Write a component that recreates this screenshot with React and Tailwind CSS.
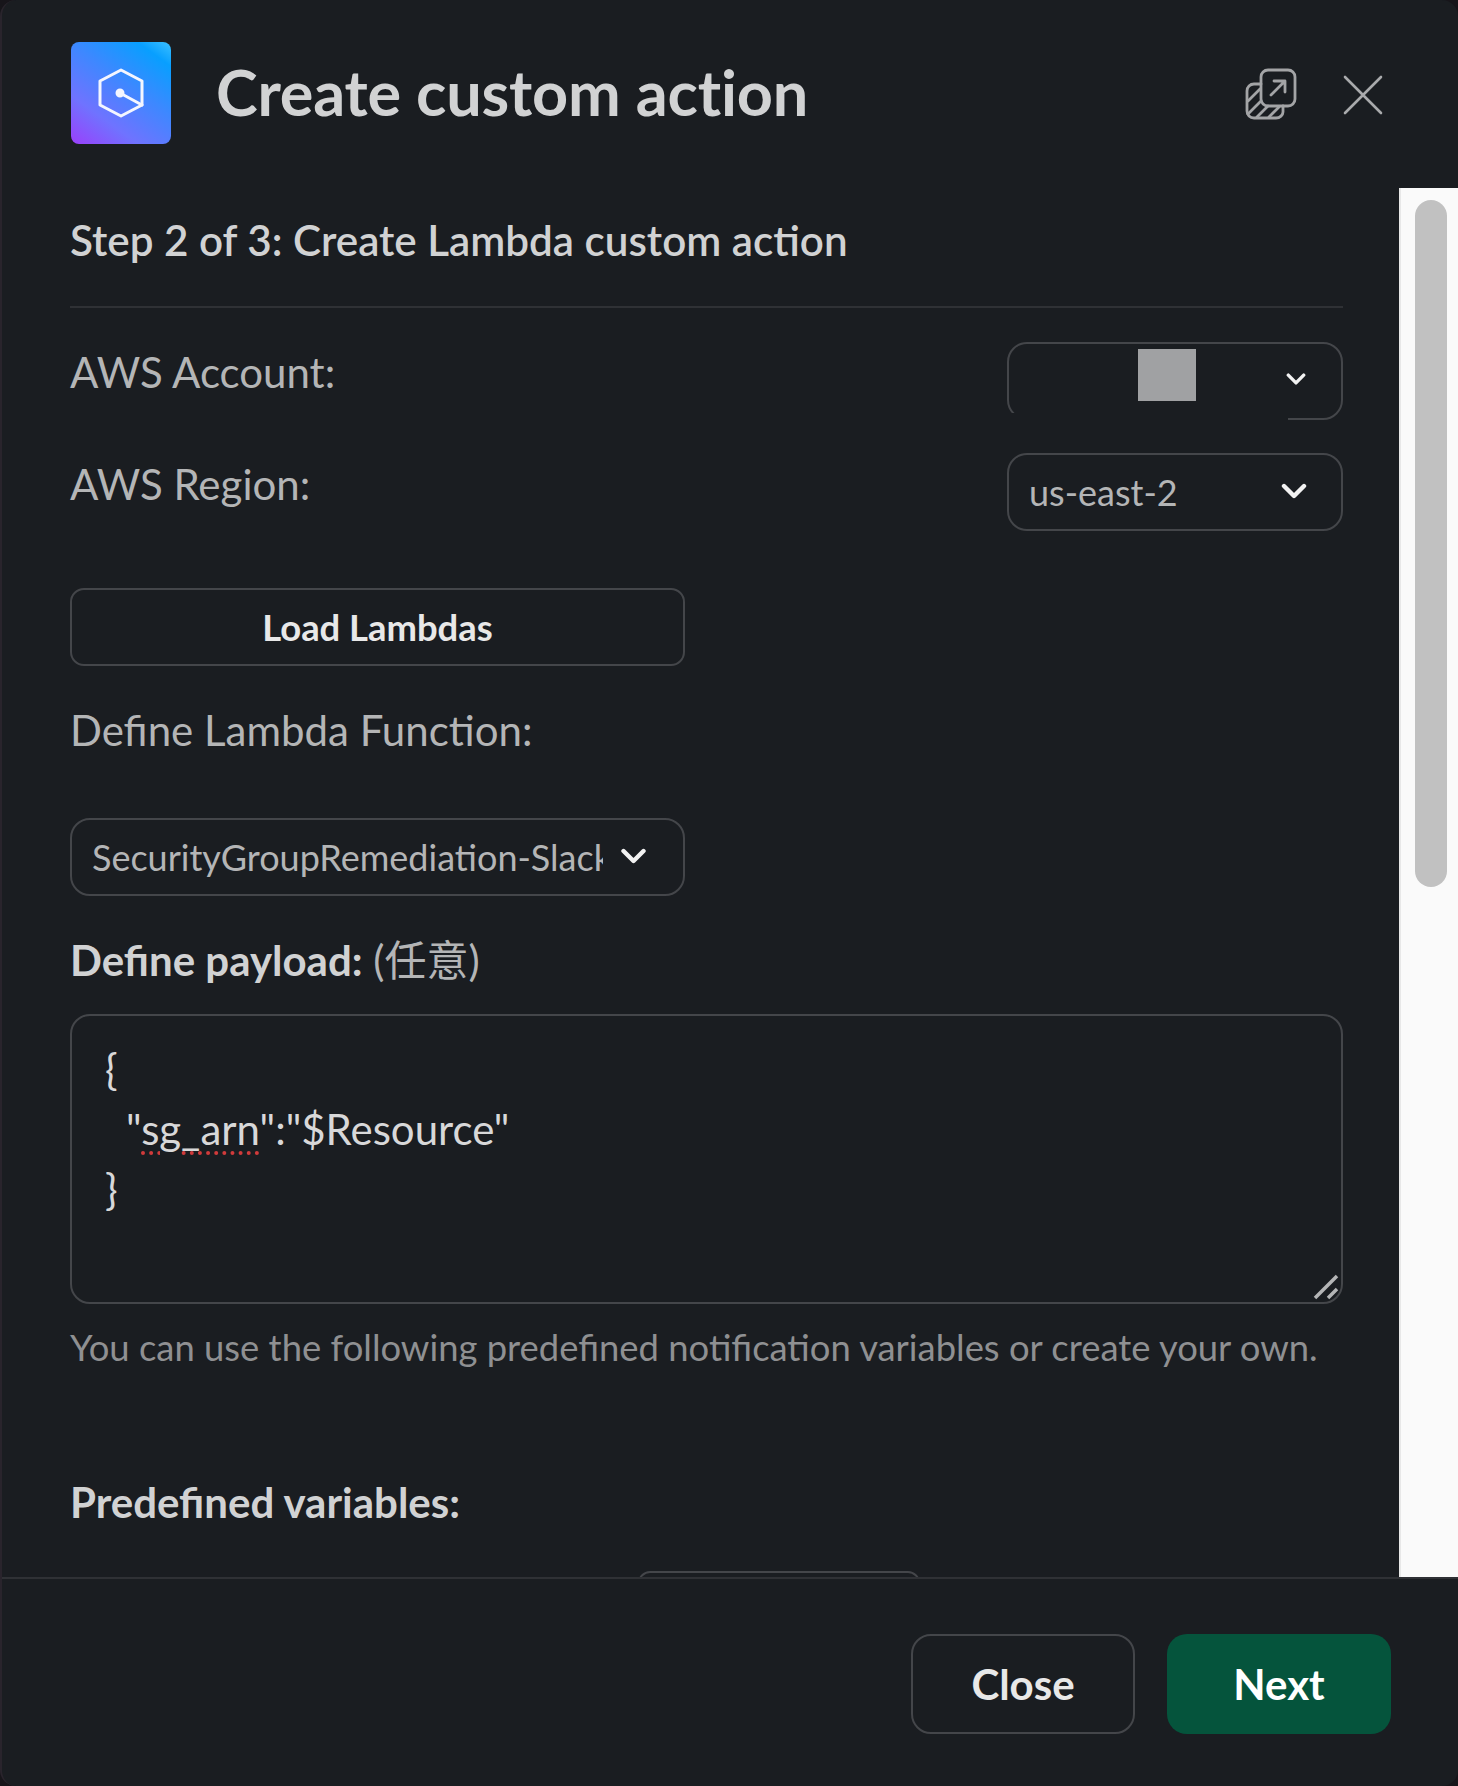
import React from "react";

const LogoMark = () => (
  <div className="flex h-[102px] w-[100px] shrink-0 items-center justify-center rounded-[8px] bg-[linear-gradient(36deg,#9b3ffb_0%,#6f73ff_28%,#3d88ff_58%,#089fff_86%,#3cc0ff_100%)]">
    <svg width="46" height="50" viewBox="0 0 46 50" fill="none" stroke="#f4f6ff" strokeWidth="3" strokeLinejoin="round" strokeLinecap="round">
      <path d="M23 2 L44 13 V37 L23 48 L2 37 V13 Z" />
      <path d="M22 25 L44 37" />
      <circle cx="22" cy="25" r="3" fill="#f4f6ff" />
    </svg>
  </div>
);

const PopOutIcon = () => (
  <svg width="52" height="52" viewBox="0 0 52 52" fill="none" stroke="#a3a4a6" strokeWidth="2.8" strokeLinecap="round" strokeLinejoin="round">
    <rect x="16" y="2" width="34" height="36" rx="7" />
    <path d="M26 27 L39 14 M29 13 H40 V24" />
    <path d="M16 16 H9 C5 16 2 19 2 23 V43 C2 47 5 50 9 50 H31 C35 50 38 47 38 44 V38" />
    <path d="M3 33 L15 21 M3 46 L16 33 M12 49 L23 38 M24 49 L34 39" />
  </svg>
);

const CloseIcon = () => (
  <svg width="40" height="40" viewBox="0 0 40 40" fill="none" stroke="#a9aaac" strokeWidth="2.6" strokeLinecap="round">
    <path d="M2 2 L38 38 M38 2 L2 38" />
  </svg>
);

const Chevron = ({ className }) => (
  <svg className={className} viewBox="0 0 26 16" fill="none" stroke="#f2f2f2" strokeWidth="4.4" strokeLinecap="round" strokeLinejoin="round">
    <path d="M3 3 L13 13 L23 3" />
  </svg>
);

const Select = ({ children, chevron }) => (
  <div className="relative flex h-[78px] w-full items-center rounded-[20px] border-2 border-[#44464a] pl-[20px] text-[36px] text-[#b4b5b6]">
    {children}
    {chevron}
  </div>
);

export default function App() {
  return (
    <div className="h-[1786px] w-[1458px] bg-[#17151a]">
      <div className="flex h-[1786px] w-[1458px] flex-col overflow-hidden rounded-[16px] border-l-2 border-[#29242c] bg-[#1a1d21] font-['Lato','Noto_Sans_CJK_SC',sans-serif]">
        <div className="flex h-[188px] shrink-0 items-start pl-[69px] pr-[75px] pt-[42px]">
          <LogoMark />
          <h1 className="ml-[45px] mt-[16px] text-[63px] leading-[68px] font-bold tracking-[-0.2px] text-[#d1d2d3]">Create custom action</h1>
          <div className="ml-auto mt-[26px]">
            <PopOutIcon />
          </div>
          <div className="ml-[46px] mt-[33px]">
            <CloseIcon />
          </div>
        </div>

        <div className="flex h-[1389px] shrink-0 overflow-hidden">
          <div className="w-[1397px] shrink-0 pl-[68px] pr-[56px]">
            <div className="border-b-2 border-[#2f3135] pb-[26px] pt-[12px] text-[42.2px] leading-[80px] font-semibold text-[#d1d2d3]">
              Step 2 of 3: Create Lambda custom action
            </div>

            <div className="mt-[34px] flex items-start justify-between">
              <div className="mt-[-6px] text-[42px] leading-[72px] text-[#b4b5b6]">AWS Account:</div>
              <div className="w-[336px]">
                <Select chevron={<Chevron className="absolute left-[277px] top-[27px] h-[16px] w-[20px]" />}>
                  <div className="absolute left-[129px] top-[5px] h-[52px] w-[58px] bg-[#a0a1a3]" />
                  <div className="absolute bottom-[-3px] left-[-3px] h-[8px] w-[282px] bg-[#1a1d21]" />
                </Select>
              </div>
            </div>

            <div className="mt-[33px] flex items-start justify-between">
              <div className="mt-[-5px] text-[42px] leading-[72px] text-[#b4b5b6]">AWS Region:</div>
              <div className="w-[336px]">
                <Select chevron={<Chevron className="absolute left-[272px] top-[28px] h-[16px] w-[26px]" />}>
                  us-east-2
                </Select>
              </div>
            </div>

            <button className="mt-[57px] flex h-[78px] w-[615px] items-center justify-center rounded-[14px] border-2 border-[#44464a] text-[36.4px] font-bold text-[#e8e8e8]">
              Load Lambdas
            </button>

            <div className="mt-[28px] text-[42px] leading-[72px] text-[#b4b5b6]">Define Lambda Function:</div>

            <div className="mt-[52px] w-[615px]">
              <Select chevron={<Chevron className="absolute left-[548px] top-[28px] h-[16px] w-[27px]" />}>
                <span className="w-[511px] overflow-hidden whitespace-nowrap">SecurityGroupRemediation-Slack</span>
              </Select>
            </div>

            <div className="mt-[28px] text-[42px] leading-[72px] text-[#b4b5b6]">
              <span className="font-bold text-[#d1d2d3]">Define payload:</span> (任意)
            </div>

            <div className="relative mt-[18px] h-[290px] rounded-[20px] border-2 border-[#44464a] pl-[33px] pt-[23px] text-[42px] leading-[60px] text-[#d8d8d9]">
              <div>{"{"}</div>
              <div className="pl-[21px]">
                "<span className="underline decoration-[#d13b3b] decoration-dotted decoration-[4px] underline-offset-[6px]">sg_arn</span>":"$Resource"
              </div>
              <div>{"}"}</div>
              <svg className="absolute bottom-[1px] right-[1px]" width="28" height="28" viewBox="0 0 28 28" stroke="#b4b5b6" strokeWidth="3.5">
                <path d="M3 25 L25 3 M16 25 L25 16" />
              </svg>
            </div>

            <div className="mt-[15px] text-[36.4px] leading-[56px] text-[#8f9092]">
              You can use the following predefined notification variables or create your own.
            </div>

            <div className="mt-[91px] text-[42px] leading-[72px] font-bold text-[#d1d2d3]">Predefined variables:</div>

            <div className="ml-[568px] mt-[33px] h-[78px] w-[282px] rounded-[12px] border-2 border-[#44464a]" />
          </div>

          <div className="flex w-[59px] shrink-0 justify-center border-l-2 border-[#e8e8e8] bg-[#fafafa] pl-[3px] pt-[12px]">
            <div className="h-[687px] w-[32px] rounded-full bg-[#c1c1c1]" />
          </div>
        </div>

        <div className="flex flex-1 items-start justify-end gap-[32px] border-t-2 border-[#2f3135] pr-[67px] pt-[55px]">
          <button className="flex h-[100px] w-[224px] items-center justify-center rounded-[20px] border-2 border-[#44464a] text-[42px] font-bold text-[#e8e8e8]">
            Close
          </button>
          <button className="flex h-[100px] w-[224px] items-center justify-center rounded-[20px] bg-[#05543c] text-[42px] font-bold text-white">
            Next
          </button>
        </div>
      </div>
    </div>
  );
}
